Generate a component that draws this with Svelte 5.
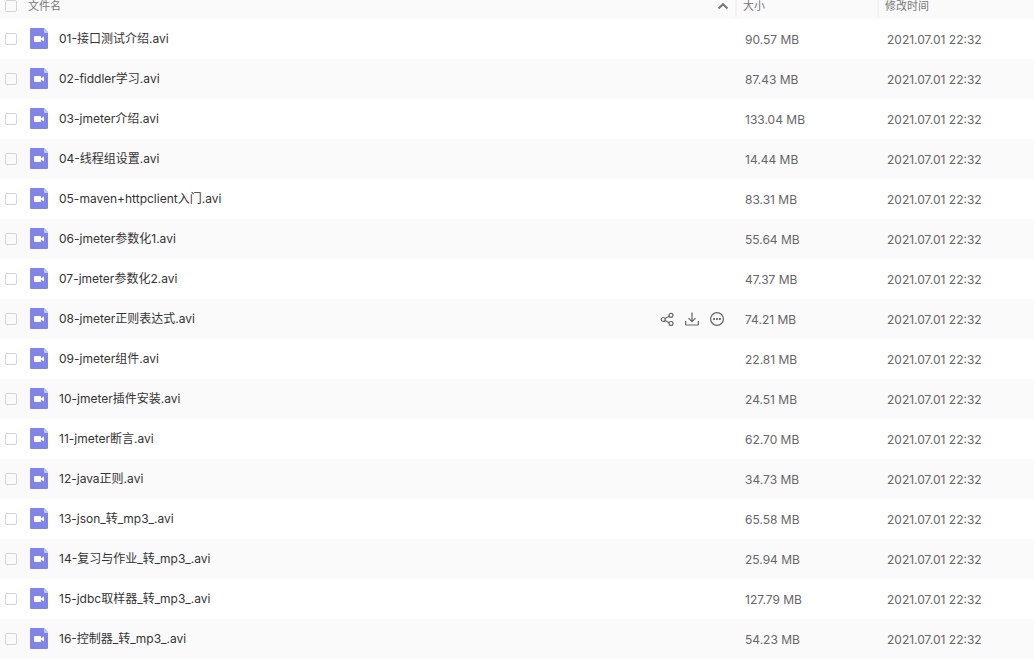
<script lang="ts">
  interface FileItem {
    name: string;
    size: string;
    modified: string;
  }

  const modified = '2021.07.01 22:32';

  const files: FileItem[] = [
    { name: '01-接口测试介绍.avi', size: '90.57 MB', modified },
    { name: '02-fiddler学习.avi', size: '87.43 MB', modified },
    { name: '03-jmeter介绍.avi', size: '133.04 MB', modified },
    { name: '04-线程组设置.avi', size: '14.44 MB', modified },
    { name: '05-maven+httpclient入门.avi', size: '83.31 MB', modified },
    { name: '06-jmeter参数化1.avi', size: '55.64 MB', modified },
    { name: '07-jmeter参数化2.avi', size: '47.37 MB', modified },
    { name: '08-jmeter正则表达式.avi', size: '74.21 MB', modified },
    { name: '09-jmeter组件.avi', size: '22.81 MB', modified },
    { name: '10-jmeter插件安装.avi', size: '24.51 MB', modified },
    { name: '11-jmeter断言.avi', size: '62.70 MB', modified },
    { name: '12-java正则.avi', size: '34.73 MB', modified },
    { name: '13-json_转_mp3_.avi', size: '65.58 MB', modified },
    { name: '14-复习与作业_转_mp3_.avi', size: '25.94 MB', modified },
    { name: '15-jdbc取样器_转_mp3_.avi', size: '127.79 MB', modified },
    { name: '16-控制器_转_mp3_.avi', size: '54.23 MB', modified }
  ];

  let selected: boolean[] = $state(files.map(() => false));
  let activeIndex = $state(7);
  let allSelected = $derived(selected.every(Boolean));

  function toggleAll() {
    const next = !allSelected;
    selected = files.map(() => next);
  }
</script>

<table class="file-list">
  <colgroup>
    <col />
    <col class="col-size" />
    <col class="col-date" />
  </colgroup>
  <thead>
    <tr>
      <th>
        <div class="head-name">
          <input type="checkbox" aria-label="全选" checked={allSelected} onchange={toggleAll} />
          <span class="head-label">文件名</span>
          <svg class="sort" width="12" height="8" viewBox="0 0 12 8" aria-hidden="true">
            <path d="M1.500 6.500 6 2.200l4.500 4.300" fill="none" stroke="#777" stroke-width="2" />
          </svg>
        </div>
      </th>
      <th><div class="head-cell">大小</div></th>
      <th><div class="head-cell">修改时间</div></th>
    </tr>
  </thead>
  <tbody>
    {#each files as file, i}
      <tr onmouseenter={() => (activeIndex = i)}>
        <td>
          <div class="name-cell">
            <input type="checkbox" id="file-{i}" bind:checked={selected[i]} />
            <svg class="file-icon" width="18" height="21" viewBox="0 0 18 21" aria-hidden="true">
              <path d="M1 0h13l4 4v16a1 1 0 0 1-1 1H1a1 1 0 0 1-1-1V1a1 1 0 0 1 1-1z" fill="#8285e8" />
              <path d="M14 0l4 4v1h-3a1 1 0 0 1-1-1z" fill="#c5c6f6" />
              <rect x="4" y="8" width="7" height="6" rx="1" fill="#fff" />
              <path d="M10.500 11l3.500-2.800v5.600z" fill="#fff" />
            </svg>
            <label for="file-{i}">{file.name}</label>
            {#if i === activeIndex}
              <div class="actions">
                <button type="button" aria-label="分享">
                  <svg width="14" height="14" viewBox="0 0 14 14">
                    <circle cx="3.200" cy="7.500" r="2" />
                    <circle cx="11" cy="3.300" r="2" />
                    <circle cx="11" cy="11.500" r="2" />
                    <path d="M5 6.500l4.200-2.300M5 8.500l4.200 2.200" />
                  </svg>
                </button>
                <button type="button" aria-label="下载">
                  <svg width="14" height="14" viewBox="0 0 14 14">
                    <path d="M7 .5v9M3.500 6.200 7 9.700l3.500-3.500M.6 9v3.200q0 .8.8.8h11.200q.8 0 .8-.8V9" />
                  </svg>
                </button>
                <button type="button" aria-label="更多">
                  <svg width="14" height="14" viewBox="0 0 14 14">
                    <circle cx="7" cy="7" r="6.400" />
                    <path d="M3.200 7h1.800M6.100 7h1.800M9 7h1.800" stroke-width="2" />
                  </svg>
                </button>
              </div>
            {/if}
          </div>
        </td>
        <td class="meta">{file.size}</td>
        <td class="meta">{file.modified}</td>
      </tr>
    {/each}
  </tbody>
</table>

<style>
  :global(body) {
    margin: 0;
    background-color: #fff;
  }

  .file-list {
    width: 100%;
    table-layout: fixed;
    border-collapse: collapse;
    font-family: Inter, 'Noto Sans CJK SC', sans-serif;
    font-size: 12px;
    color: #333;
  }

  .col-size {
    width: 142px;
  }

  .col-date {
    width: 157px;
  }

  th,
  td {
    padding: 0;
    text-align: left;
    font-weight: normal;
  }

  th {
    height: 19px;
    vertical-align: top;
    background-color: #fafafa;
    color: #777;
    font-size: 11px;
    line-height: 12px;
  }

  .head-name,
  .name-cell {
    display: flex;
    align-items: center;
    padding-left: 5px;
  }

  .head-name {
    padding-right: 6px;
  }

  .head-label {
    flex: 1;
    margin-left: 11px;
  }

  .head-cell {
    height: 17px;
    padding-left: 6px;
    border-left: 2px solid #f2f2f2;
  }

  input {
    appearance: none;
    flex-shrink: 0;
    width: 12px;
    height: 12px;
    margin: 0;
    border: 1px solid #d4d4d4;
    border-radius: 2px;
    background: transparent;
  }

  input:checked {
    background-color: #8285e8;
    border-color: #8285e8;
  }

  tbody tr:nth-child(even) {
    background-color: #fafafa;
  }

  td {
    height: 40px;
  }

  .file-icon {
    flex-shrink: 0;
    margin: 0 11px 2px 13px;
  }

  label {
    flex: 1;
    line-height: 16px;
    white-space: nowrap;
  }

  .actions {
    display: flex;
    gap: 11px;
    padding-right: 11px;
  }

  .actions button {
    display: flex;
    padding: 0;
    border: none;
    background: transparent;
    cursor: pointer;
  }

  .actions svg {
    fill: none;
    stroke: #666;
    stroke-width: 1.2;
  }

  .meta {
    padding-left: 10px;
    color: #666;
    white-space: nowrap;
  }
</style>
